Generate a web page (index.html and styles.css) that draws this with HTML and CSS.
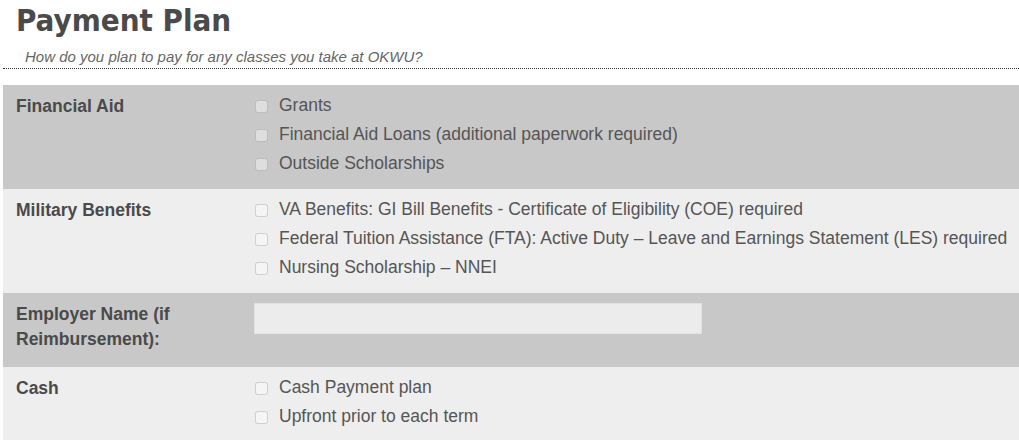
FILE: index.html
```html
<!DOCTYPE html>
<html lang="en">
<head>
    <meta charset="UTF-8">
    <meta name="viewport" content="width=device-width, initial-scale=1.0">
    <title>Payment Plan - OKWU</title>
    <link rel="stylesheet" href="styles.css">
</head>
<body>
    <div class="page">
        <div class="header">
            <h1>Payment Plan</h1>
            <p class="subtitle">How do you plan to pay for any classes you take at OKWU?</p>
        </div>

        <form class="plan-form">
            <div class="row dark">
                <div class="label">Financial Aid</div>
                <div class="options">
                    <label class="option"><input type="checkbox"> Grants</label>
                    <label class="option"><input type="checkbox"> Financial Aid Loans (additional paperwork required)</label>
                    <label class="option"><input type="checkbox"> Outside Scholarships</label>
                </div>
            </div>
            <div class="row light">
                <div class="label">Military Benefits</div>
                <div class="options">
                    <label class="option"><input type="checkbox"> VA Benefits: GI Bill Benefits - Certificate of Eligibility (COE) required</label>
                    <label class="option"><input type="checkbox"> Federal Tuition Assistance (FTA): Active Duty &ndash; Leave and Earnings Statement (LES) required</label>
                    <label class="option"><input type="checkbox"> Nursing Scholarship &ndash; NNEI</label>
                </div>
            </div>
            <div class="row dark employer">
                <div class="label">Employer Name (if Reimbursement):</div>
                <div class="options">
                    <input type="text" class="text-input">
                </div>
            </div>
            <div class="row light">
                <div class="label">Cash</div>
                <div class="options">
                    <label class="option"><input type="checkbox"> Cash Payment plan</label>
                    <label class="option"><input type="checkbox"> Upfront prior to each term</label>
                </div>
            </div>
        </form>
    </div>
</body>
</html>
```

FILE: styles.css
```css
body {
    margin: 0;
    background-color: white;
    font-family: "Liberation Sans", Arial, sans-serif;
    color: #555;
}
.page {
    padding-left: 3px;
}
.header {
    border-bottom: 1px dotted #333;
    padding-bottom: 3px;
}
h1 {
    margin: 0;
    padding: 2px 0 0 13px;
    font-family: "DejaVu Sans Condensed", "DejaVu Sans", sans-serif;
    font-weight: bold;
    font-size: 31px;
    line-height: 36px;
    color: #4a4a4a;
}
.subtitle {
    margin: 10px 0 0;
    padding-left: 22px;
    font-size: 15px;
    line-height: 17px;
    font-style: italic;
    color: #666;
}
.plan-form {
    margin-top: 16px;
}
.row {
    display: grid;
    grid-template-columns: 251px 1fr;
    padding: 9px 0 11px;
}
.row.dark {
    background-color: #c8c8c8;
}
.row.light {
    background-color: #eeeeee;
}
.row.employer {
    padding-bottom: 15px;
}
.label {
    padding-left: 13px;
    padding-right: 60px;
    font-weight: bold;
    font-size: 17.5px;
    line-height: 25px;
    color: #4a4a4a;
}
.options {
    margin-top: -3px;
}
.option {
    display: flex;
    align-items: center;
    font-size: 17.5px;
    line-height: 29px;
    white-space: nowrap;
}
.option input {
    appearance: none;
    -webkit-appearance: none;
    width: 13px;
    height: 13px;
    margin: 1px 11px 0 1px;
    border: 1px solid rgba(0,0,0,0.15);
    border-radius: 3px;
    background-color: rgba(255,255,255,0.4);
}
.text-input {
    display: block;
    width: 448px;
    height: 31px;
    margin-top: 4px;
    box-sizing: border-box;
    border: 1px solid #e2e2e2;
    background-color: #ececec;
}
```
